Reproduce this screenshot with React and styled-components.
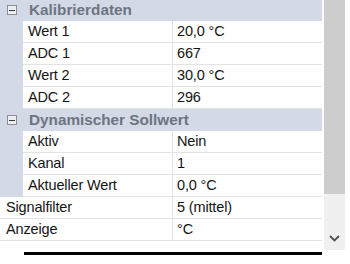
import React from 'react';
import styled, { createGlobalStyle } from 'styled-components';

const GlobalStyle = createGlobalStyle`
  html, body {
    margin: 0;
    padding: 0;
    background: #ffffff;
  }
  body {
    font-family: "Liberation Sans", Arial, sans-serif;
  }
`;

const Frame = styled.div`
  width: 350px;
  height: 264px;
  display: flex;
  overflow: hidden;
  background: #ffffff;
`;

const Main = styled.div`
  width: 322px;
  display: flex;
  flex-direction: column;
  margin-top: -1px;
`;

const CategoryRow = styled.div`
  height: 22px;
  display: flex;
  align-items: center;
  background: #d3d9e7;
  box-sizing: border-box;
`;

const ExpandBox = styled.div`
  width: 10px;
  height: 10px;
  margin: 0 12px 0 7px;
  box-sizing: border-box;
  border: 1px solid #8c8f96;
  background: #eceef2;
  display: flex;
  align-items: center;
  justify-content: center;

  &::after {
    content: '';
    width: 6px;
    height: 1px;
    background: #3a3a3a;
  }
`;

const CategoryTitle = styled.span`
  font-size: 15.3px;
  font-weight: bold;
  color: #6e7481;
`;

const PropRow = styled.div`
  height: 22px;
  display: flex;
`;

const Gutter = styled.div`
  width: 23px;
  flex: none;
  background: #d3d9e7;
`;

const Cells = styled.div`
  flex: 1;
  display: grid;
  grid-template-columns: ${(p) => p.$nameWidth}px 1fr;
  border-bottom: 1px solid #e3e3e3;
  background: #ffffff;
  font-size: 14.5px;
  line-height: 21px;
  color: #141414;
  letter-spacing: -0.15px;
`;

const NameCell = styled.div`
  padding-left: ${(p) => p.$pad}px;
  border-right: 1px solid #e3e3e3;
  white-space: nowrap;
  overflow: hidden;
`;

const ValueCell = styled.div`
  padding-left: 4px;
  white-space: nowrap;
  overflow: hidden;
`;

const Splitter = styled.div`
  margin: 11px 0 0 24px;
  height: 3px;
  background: #000000;
`;

const ScrollBar = styled.div`
  width: 21px;
  height: 250px;
  margin-left: 2px;
  background: #f0f0f0;
  display: flex;
  flex-direction: column;
`;

const Thumb = styled.div`
  height: 194px;
  background: #cdcdcd;
`;

const ArrowButton = styled.div`
  margin-top: auto;
  height: 24px;
  display: flex;
  align-items: center;
  justify-content: center;
`;

const calibration = [
  ['Wert 1', '20,0 °C'],
  ['ADC 1', '667'],
  ['Wert 2', '30,0 °C'],
  ['ADC 2', '296'],
];

const dynamic = [
  ['Aktiv', 'Nein'],
  ['Kanal', '1'],
  ['Aktueller Wert', '0,0 °C'],
];

const topLevel = [
  ['Signalfilter', '5 (mittel)'],
  ['Anzeige', '°C'],
];

const Property = ({ name, value, nested }) => (
  <PropRow>
    {nested && <Gutter />}
    <Cells $nameWidth={nested ? 150 : 173}>
      <NameCell $pad={nested ? 5 : 6}>{name}</NameCell>
      <ValueCell>{value}</ValueCell>
    </Cells>
  </PropRow>
);

const Category = ({ title }) => (
  <CategoryRow>
    <ExpandBox />
    <CategoryTitle>{title}</CategoryTitle>
  </CategoryRow>
);

export default function App() {
  return (
    <>
      <GlobalStyle />
      <Frame>
        <Main>
          <Category title="Kalibrierdaten" />
          {calibration.map(([n, v]) => (
            <Property key={n} name={n} value={v} nested />
          ))}
          <Category title="Dynamischer Sollwert" />
          {dynamic.map(([n, v]) => (
            <Property key={n} name={n} value={v} nested />
          ))}
          {topLevel.map(([n, v]) => (
            <Property key={n} name={n} value={v} />
          ))}
          <Splitter />
        </Main>
        <ScrollBar>
          <Thumb />
          <ArrowButton>
            <svg width="11" height="7" viewBox="0 0 11 7">
              <path d="M1 1 L5.5 5.5 L10 1" fill="none" stroke="#505050" strokeWidth="1.8" />
            </svg>
          </ArrowButton>
        </ScrollBar>
      </Frame>
    </>
  );
}
